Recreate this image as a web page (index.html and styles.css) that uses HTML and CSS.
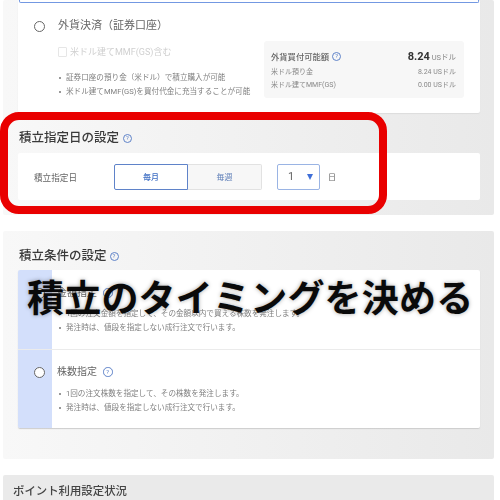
FILE: index.html
```html
<!DOCTYPE html>
<html lang="ja">
<head>
<meta charset="utf-8">
<title>積立のタイミングを決める</title>
<link rel="stylesheet" href="styles.css">
</head>
<body>
<div class="page">
  <div class="content">
    <section class="panel panel-first">
      <div class="card card-pay">
        <div class="selected-edge"></div>
        <div class="radio-line"><span class="radio"></span><span class="opt-label">外貨決済（証券口座）</span></div>
        <div class="pay-body">
          <div class="pay-left">
            <label class="check"><span class="box"></span>米ドル建てMMF(GS)含む</label>
            <ul class="notes">
              <li>証券口座の預り金（米ドル）で積立購入が可能</li>
              <li>米ドル建てMMF(GS)を買付代金に充当することが可能</li>
            </ul>
          </div>
          <div class="funds">
            <div class="funds-row funds-head">
              <span class="funds-title">外貨買付可能額<span class="help help-sm">?</span></span>
              <span><b class="amount">8.24</b> <span class="unit">USドル</span></span>
            </div>
            <div class="funds-row"><span>米ドル預り金</span><span>8.24 USドル</span></div>
            <div class="funds-row"><span>米ドル建てMMF(GS)</span><span>0.00 USドル</span></div>
          </div>
        </div>
      </div>
      <h2 class="title">積立指定日の設定<span class="help">?</span></h2>
      <div class="card date-row">
        <span class="date-label">積立指定日</span>
        <div class="segments">
          <span class="seg seg-on">毎月</span>
          <span class="seg seg-off">毎週</span>
        </div>
        <div class="select"><span>1</span><i class="caret"></i></div>
        <span class="day">日</span>
      </div>
    </section>

    <section class="panel panel-cond">
      <h2 class="title">積立条件の設定<span class="help">?</span></h2>
      <div class="card cond-card">
        <div class="cond-item">
          <div class="radio-line"><span class="radio radio-strong"></span><span class="opt-label">金額指定<span class="help help-md">?</span></span></div>
          <ul class="notes">
            <li>1回の注文金額を指定して、その金額以内で買える株数を発注します。</li>
            <li>発注時は、値段を指定しない成行注文で行います。</li>
          </ul>
        </div>
        <div class="cond-item cond-second">
          <div class="radio-line"><span class="radio radio-strong"></span><span class="opt-label">株数指定<span class="help help-md">?</span></span></div>
          <ul class="notes">
            <li>1回の注文株数を指定して、その株数を発注します。</li>
            <li>発注時は、値段を指定しない成行注文で行います。</li>
          </ul>
        </div>
      </div>
    </section>

    <section class="panel panel-last">
      <h2 class="title-last">ポイント利用設定状況</h2>
    </section>
  </div>

  <div class="red-frame"></div>
  <div class="caption">積立のタイミングを決める</div>
</div>
</body>
</html>
```

FILE: styles.css
```css
* { box-sizing: border-box; }
html, body { margin: 0; padding: 0; background: #fff; }
body { font-family: Roboto, "Noto Sans CJK JP", sans-serif; color: #555; }
ul, h2 { margin: 0; padding: 0; }

.page { position: relative; width: 500px; height: 500px; overflow: hidden; }
.content { width: 491px; margin-left: 3px; display: flex; flex-direction: column; gap: 16px; filter: blur(0.4px); }

.panel { background: linear-gradient(90deg, #f8f8f8 0%, #e9e9e9 100%); border-radius: 2px; padding: 0 14px 0 15px; }
.panel-first { height: 215px; }
.panel-cond { height: 228px; padding-top: 16px; }
.panel-last { height: 60px; background: #eaeaea; padding: 8px 10px; }

.card { background: #fff; border-radius: 2px; }
.card-pay { height: 113px; position: relative; box-shadow: 0 1px 1px #ddd; }
.selected-edge { height: 3px; margin: 0 1px; border: 1px solid #7398e2; border-top: 0; border-radius: 0 0 2px 2px; }

.radio-line { display: flex; align-items: center; }
.radio { width: 11px; height: 11px; border: 1.5px solid #666; border-radius: 50%; background: #fff; margin-left: 16px; margin-right: 13px; flex: none; }
.radio-strong { border: 1.7px solid #666; }
.opt-label { font-size: 11px; color: #666; line-height: 16px; display: flex; align-items: center; }
.card-pay .radio-line { margin-top: 15px; }

.pay-body { display: flex; justify-content: space-between; padding: 0 16px 0 40px; margin-top: 7px; }
.pay-left { padding-top: 5px; min-width: 0; }
.check { display: flex; align-items: center; font-size: 9px; color: #d0d0d0; line-height: 12px; }
.box { width: 9px; height: 10px; border: 1px solid #e6e6e6; border-radius: 1px; margin-right: 3px; }

.notes { list-style: none; margin-top: 13px; }
.notes li { font-size: 7.6px; line-height: 14px; color: #808080; padding-left: 8px; position: relative; white-space: nowrap; }
.notes li::before { content: ""; position: absolute; left: 1px; top: 6px; width: 2px; height: 2px; border-radius: 50%; background: #777; }

.funds { width: 200px; height: 57px; background: #f7f7f7; border-radius: 3px; padding: 7px 8px 0 7px; font-size: 7px; color: #888; flex: none; margin-left: -40px; }
.funds-row { display: flex; justify-content: space-between; align-items: center; height: 13.5px; }
.funds-head { height: 16px; margin-bottom: 0; }
.funds-title { font-size: 8.3px; font-weight: 500; color: #666; display: flex; align-items: center; }
.amount { font-size: 11px; color: #333; }
.unit { font-size: 7.5px; color: #888; }

.help { display: inline-flex; align-items: center; justify-content: center; width: 9px; height: 9px; border: 1px solid #5f83c9; border-radius: 50%; font-size: 6px; font-weight: 400; color: #5f83c9; margin-left: 4px; line-height: 1; }
.help-sm { margin-left: 3px; }
.help-md { margin-left: 6px; width: 9.5px; height: 9.5px; }

.title { font-size: 12.5px; line-height: 18px; font-weight: 500; color: #3a3a3a; display: flex; align-items: center; padding-left: 1px; }
.panel-first .title { margin-top: 16px; }
.title-last { font-size: 11.4px; line-height: 16px; font-weight: 500; color: #444; }
.panel-cond .title .help { margin-left: 3px; }

.date-row { height: 47px; margin-top: 6px; display: flex; align-items: center; padding-left: 16px; }
.date-label { font-size: 8.6px; color: #666; width: 81px; flex: none; margin-right: -1px; }
.segments { display: flex; height: 26px; }
.seg { width: 74px; display: flex; align-items: center; justify-content: center; font-size: 8px; }
.seg-on { border: 1px solid #5f83c9; border-radius: 2px 0 0 2px; color: #3f6fc4; font-weight: 500; background: #fff; }
.seg-off { border: 1px solid #e2e2e2; border-left: 0; border-radius: 0 2px 2px 0; color: #5f7fb8; background: #f7f7f7; }
.select { width: 43px; height: 26px; margin-left: 15px; border: 1px solid #9ab4e4; border-radius: 2px; display: flex; align-items: center; justify-content: space-between; padding: 0 6px 0 10px; font-size: 11px; color: #666; }
.caret { width: 0; height: 0; border-left: 3.5px solid transparent; border-right: 3.5px solid transparent; border-top: 6px solid #3f6fd8; }
.day { font-size: 8px; color: #666; margin-left: 8px; }

.cond-card { height: 158px; margin-top: 5px; background: linear-gradient(90deg, #d3dffb 0 34px, #fff 34px); box-shadow: 0 1px 1px #ccc; }
.cond-item { height: 79px; padding-top: 15px; }
.cond-second { border-top: 1px solid #ebebeb; padding-top: 14px; }
.cond-item .radio { margin-right: 12px; }
.cond-item .opt-label { font-size: 10px; }
.cond-item .notes { margin-top: 6px; padding-left: 40px; }
.cond-second .notes { margin-top: 7px; }

.red-frame { position: absolute; left: 0; top: 112px; width: 387px; height: 102px; border: 8.5px solid #e90000; border-radius: 19px; }
.caption { position: absolute; left: 27px; top: 270px; width: 470px; font-family: "Noto Sans CJK JP", sans-serif; font-size: 37px; letter-spacing: 0.2px; line-height: 52px; font-weight: 700; color: #0a0a0a; white-space: nowrap; text-shadow: 0 0 4px rgba(0,0,0,.35); }
```
